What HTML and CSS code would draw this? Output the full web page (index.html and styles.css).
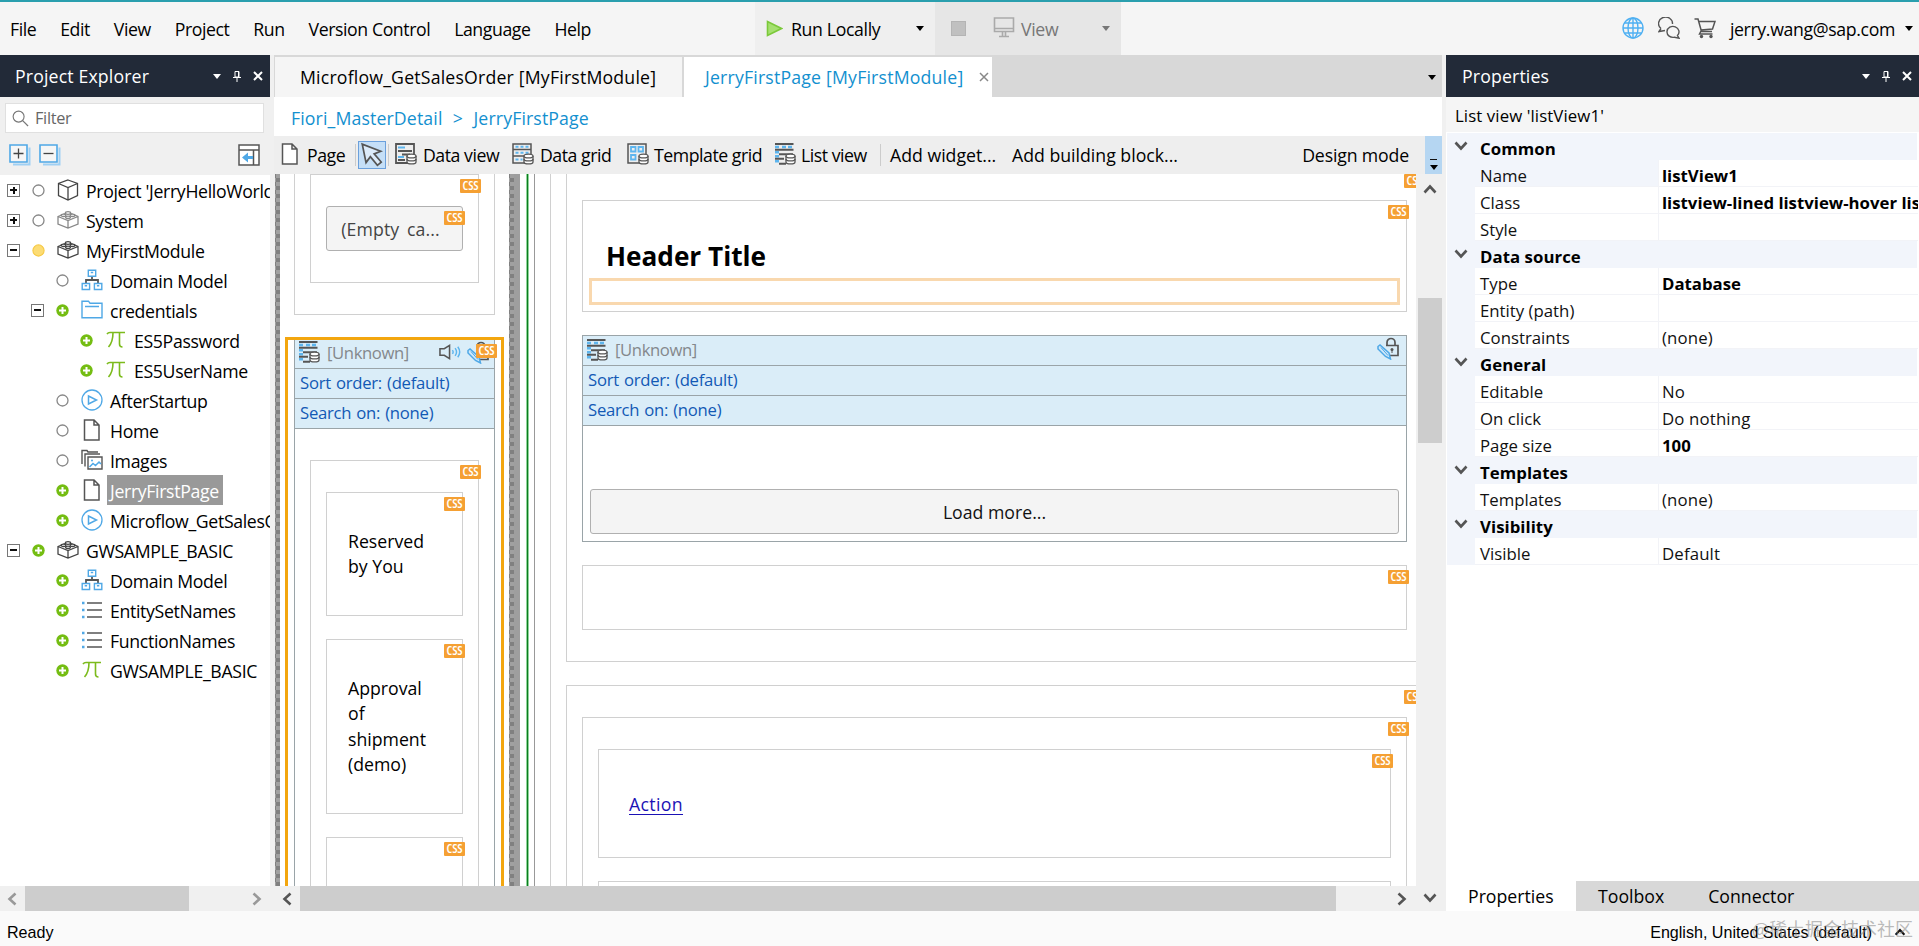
FILE: index.html
```html
<!DOCTYPE html>
<html lang="en">
<head>
    <meta charset="UTF-8">
    <title>JerryFirstPage [MyFirstModule]</title>
    <link rel="stylesheet" href="styles.css">
</head>
<body>
    <!-- Icon set -->
    <svg class="icon-defs" xmlns="http://www.w3.org/2000/svg">
        <symbol id="i-page" viewBox="0 0 22 22"><path d="M3.5 1h9.5l5 5v15H3.500zM13 1v5h5" fill="#fff" stroke="#555" stroke-width="1.5"/></symbol>
        <symbol id="i-cube" viewBox="0 0 22 22"><path d="M11 1l9.500 3.500v12L11 21l-9.500-4.500v-12zM1.500 4.500L11 8.500l9.500-4M11 8.500V21" fill="none" stroke="#444" stroke-width="1.300"/></symbol>
        <symbol id="i-brick" viewBox="0 0 22 22"><g fill="none" stroke="currentColor" stroke-width="1.300"><path d="M1 7.500L11 3.500l10 4v7.500L11 19 1 15zM1 7.500L11 11.500l10-4M11 11.500v7.500"/><g fill="#fff"><ellipse cx="11" cy="4" rx="2.600" ry="1.300"/><ellipse cx="6.500" cy="6.300" rx="2.400" ry="1.200"/><ellipse cx="15.500" cy="6.300" rx="2.400" ry="1.200"/><ellipse cx="11" cy="8.300" rx="2.400" ry="1.200"/></g></g></symbol>
        <symbol id="i-domain" viewBox="0 0 22 22"><path d="M11 8v3M5 14v-3h12v3" fill="none" stroke="#555" stroke-width="1.800"/><g fill="#fff" stroke="#4fa8e6" stroke-width="1.400"><path d="M7.300 1.200h7.400v6H7.300zM1.200 14.500h7.400v6H1.200zM13.400 14.500h7.400v6h-7.400z"/><path d="M9.800 3.500h2.400M3.700 16.800h2.400M15.900 16.800h2.400"/></g></symbol>
        <symbol id="i-folder" viewBox="0 0 22 22"><path d="M1 18.800V2.200h6.500l1.500 2h12v14.600zM4 7.500h14" fill="none" stroke="#4fa8e6" stroke-width="1.400"/></symbol>
        <symbol id="i-pi" viewBox="0 0 22 22"><path d="M2 5.200Q3 3.500 5 3.500h15M8 3.500Q8 13 3.500 18M14.500 3.500V15q0 3 3 3" fill="none" stroke="#7cbb1c" stroke-width="1.600"/></symbol>
        <symbol id="i-flow" viewBox="0 0 22 22"><circle cx="11" cy="11" r="10" fill="none" stroke="#4fa8e6" stroke-width="1.300"/><path d="M7.500 7v8l8-4z" fill="none" stroke="#4fa8e6" stroke-width="1.500"/></symbol>
        <symbol id="i-images" viewBox="0 0 22 22"><path d="M1 15V1.500h5l1 1.500h10M4 17.500V5h15" fill="none" stroke="#555" stroke-width="1.400"/><path d="M7 8h14v12H7z" fill="#fff" stroke="#555" stroke-width="1.400"/><path d="M8.500 18l3.500-3.500 2.500 2L18 13l2 2" fill="none" stroke="#4fa8e6" stroke-width="1.500"/><circle cx="11" cy="11.500" r="1" fill="#4fa8e6"/></symbol>
        <symbol id="i-list" viewBox="0 0 22 22"><path d="M6 4h15M6 11h15M6 18h15" stroke="#555" stroke-width="1.700"/><path d="M1 4h2.500M1 11h2.500M1 18h2.500" stroke="#4fa8e6" stroke-width="2.500"/></symbol>
        <symbol id="i-plus" viewBox="0 0 13 13"><circle cx="6.500" cy="6.500" r="6.200" fill="#74bd12"/><path d="M6.500 3v7M3 6.500h7" stroke="#fff" stroke-width="2"/></symbol>
        <symbol id="i-none" viewBox="0 0 13 13"><circle cx="6.500" cy="6.500" r="5.500" fill="#fff" stroke="#888" stroke-width="1.300"/></symbol>
        <symbol id="i-changed" viewBox="0 0 13 13"><circle cx="6.500" cy="6.500" r="5.600" fill="#fcdc74" stroke="#f6c944" stroke-width="1.100"/></symbol>
        <symbol id="i-db" viewBox="0 0 22 22"><path d="M12 13v6c0 2.600 9 2.600 9 0v-6" fill="#fff" stroke="#555" stroke-width="1.300"/><path d="M12 16c0 2.600 9 2.600 9 0" fill="none" stroke="#555" stroke-width="1.300"/><ellipse cx="16.500" cy="13" rx="4.500" ry="1.900" fill="#fff" stroke="#555" stroke-width="1.300"/></symbol>
        <symbol id="i-dataview" viewBox="0 0 22 22"><path d="M1 1h18v19H1z" fill="none" stroke="#555" stroke-width="1.800"/><path d="M3 4.500h7M3 14h6" stroke="#5db5ee" stroke-width="2.200"/><path d="M3 8h14M7 11.500h8M3 17h7" stroke="#555" stroke-width="2"/><use href="#i-db"/></symbol>
        <symbol id="i-datagrid" viewBox="0 0 22 22"><path d="M1 1h18v19H1zM1 6.500h18M1 13h18" fill="none" stroke="#555" stroke-width="1.500"/><path d="M3.500 3.800h13M3.500 9.800h13M3.500 16.500h7" stroke="#5db5ee" stroke-width="2" stroke-dasharray="3 2"/><use href="#i-db"/></symbol>
        <symbol id="i-template" viewBox="0 0 22 22"><path d="M1 1h18v19H1z" fill="none" stroke="#555" stroke-width="1.500"/><path d="M4 4h4.500v4.500H4zM11.500 4H16v4.500h-4.500zM4 12h4.500v4.500H4z" fill="none" stroke="#5db5ee" stroke-width="1.800"/><use href="#i-db"/></symbol>
        <symbol id="i-listview" viewBox="0 0 22 22"><path d="M1 4h4M8 4h4M14 4h4M1 9.300h4M1 13.300h4M1 18.300h4" stroke="#5db5ee" stroke-width="2.600"/><path d="M1 1h18.500M1 6.800h18.500M5 11.200h14M1 15.700h9M5 20.700h7" stroke="#555" stroke-width="1.900"/><use href="#i-db"/></symbol>
        <symbol id="i-pencil" viewBox="0 0 24 24"><path d="M10 10V6.500a4 4 0 0 1 8 0V10M9 9.500h12v10H9.500" fill="none" stroke="#555" stroke-width="1.700"/><circle cx="15" cy="13.500" r="1.500" fill="#555"/><path d="M15 14v3" stroke="#555"/><path d="M1 10.500L3 9l9 8 1.500 6-5-2.500L1 13z" fill="#cfe8fa" stroke="#4fa8e6" stroke-width="1.500"/><path d="M4 11.500l7 8" stroke="#4fa8e6"/></symbol>
        <symbol id="i-sound" viewBox="0 0 24 18"><path d="M1 5.500h4.500L11 2v14l-5.500-3.500H1z" fill="none" stroke="#555" stroke-width="1.600"/><path d="M14 7q1.500 2 0 4M16.800 5q3 4 0 8M19.600 3.500q4 5.500 0 11" fill="none" stroke="#5db5ee" stroke-width="1.500"/></symbol>
        <symbol id="i-pin" viewBox="0 0 8 11"><path d="M2 .500h4v5.500H2zM0 6.500h8M4 6.500V11M5.500.500V6" fill="none" stroke="#fff"/></symbol>
        <symbol id="i-close" viewBox="0 0 10 10"><path d="M1 1l8 8M9 1L1 9" fill="none" stroke="currentColor"/></symbol>
        <symbol id="i-chev" viewBox="0 0 14 10"><path d="M1.500 1.500L7 7.500l5.500-6" fill="none" stroke="currentColor" stroke-width="2.600"/></symbol>
    </svg>

    <div class="app">
        <!-- Menu bar -->
        <div class="menubar">
            <div class="menu">
                <span>File</span><span>Edit</span><span>View</span><span>Project</span><span>Run</span><span>Version Control</span><span>Language</span><span>Help</span>
            </div>
            <div class="run-box">
                <svg class="play" viewBox="0 0 17 17"><path d="M1.500 1.500v14l14-7z" fill="#a5e070" stroke="#7bc93a" stroke-width="1.600"/></svg>
                <span>Run Locally</span>
                <i class="caret"></i>
            </div>
            <div class="view-box">
                <div class="stop"></div>
                <svg class="monitor" viewBox="0 0 22 21"><path d="M1.500 1h19v13.500h-19zM1.500 11.500h19M9.500 14.500V19M12.500 14.500V19M6 19.500h10" fill="none" stroke="#aaa" stroke-width="1.600"/></svg>
                <span>View</span>
                <i class="caret"></i>
            </div>
            <div class="account">
                <svg viewBox="0 0 22 22"><g fill="none" stroke="#4fb0f2" stroke-width="1.400"><circle cx="11" cy="11" r="10"/><ellipse cx="11" cy="11" rx="5" ry="10"/><path d="M11 1v20M1 11h20M2.500 6h17M2.500 16h17"/></g></svg>
                <svg viewBox="0 0 22 22"><g fill="none" stroke="#555" stroke-width="1.400"><path d="M3 11.500A7 6.500 0 1 1 14.500 7M3 11.500L1 14.500l6-1"/><path d="M19.500 18.500a6 5.500 0 1 0-3 1.700l4.500 1z"/></g></svg>
                <svg viewBox="0 0 22 22"><path d="M.500 2h3.500l3.500 12.500h10.500M4.800 4.500H21l-2.500 7.500-11.500 1M7 14l-1.500 3h13" fill="none" stroke="#555" stroke-width="1.500"/><circle cx="7.500" cy="19.500" r="1.700" fill="#555"/><circle cx="17" cy="19.500" r="1.700" fill="#555"/></svg>
                <span>jerry.wang@sap.com</span>
                <i class="caret"></i>
            </div>
        </div>

        <div class="workspace">
            <!-- Project Explorer -->
            <div class="explorer">
                <div class="panel-head">
                    <span>Project Explorer</span>
                    <i class="caret"></i><svg class="pin"><use href="#i-pin"/></svg><svg class="close"><use href="#i-close"/></svg>
                </div>
                <div class="filter">
                    <svg viewBox="0 0 18 18"><circle cx="7" cy="7" r="5.800" fill="none" stroke="#777" stroke-width="1.200"/><path d="M11.300 11.300L17 17" stroke="#777" stroke-width="1.300"/></svg>
                    <span>Filter</span>
                </div>
                <div class="tree-tools">
                    <svg viewBox="0 0 22 22"><path d="M4 20.500h16.500V3.500" fill="none" stroke="#9fd0f3" stroke-width="2"/><path d="M1 1h17v17H1z" fill="#f6f6f6" stroke="#4fa8e6" stroke-width="1.600"/><path d="M9.500 4.500v10M4.500 9.500h10" stroke="#444" stroke-width="1.300"/></svg>
                    <svg viewBox="0 0 22 22"><path d="M4 20.500h16.500V3.500" fill="none" stroke="#9fd0f3" stroke-width="2"/><path d="M1 1h17v17H1z" fill="#f6f6f6" stroke="#4fa8e6" stroke-width="1.600"/><path d="M4.500 9.500h10" stroke="#444" stroke-width="1.300"/></svg>
                    <svg class="dock" viewBox="0 0 22 22"><path d="M1 1h20v20H1zM1 6h20M15.500 6v15" fill="#fff" stroke="#555" stroke-width="1.500"/><path d="M4 13.500l6-5v3.500h5v3h-5v3.500z" fill="#4fa8e6"/></svg>
                </div>
                <div class="tree">
                    <div class="row"><b class="exp plus"></b><svg class="st"><use href="#i-none"/></svg><svg class="ic"><use href="#i-cube"/></svg><span>Project 'JerryHelloWorld'</span></div>
                    <div class="row"><b class="exp plus"></b><svg class="st"><use href="#i-none"/></svg><svg class="ic light"><use href="#i-brick"/></svg><span>System</span></div>
                    <div class="row"><b class="exp"></b><svg class="st"><use href="#i-changed"/></svg><svg class="ic"><use href="#i-brick"/></svg><span>MyFirstModule</span></div>
                    <div class="row l1"><svg class="st"><use href="#i-none"/></svg><svg class="ic"><use href="#i-domain"/></svg><span>Domain Model</span></div>
                    <div class="row l1 open"><b class="exp"></b><svg class="st"><use href="#i-plus"/></svg><svg class="ic"><use href="#i-folder"/></svg><span>credentials</span></div>
                    <div class="row l2"><svg class="st"><use href="#i-plus"/></svg><svg class="ic"><use href="#i-pi"/></svg><span>ES5Password</span></div>
                    <div class="row l2"><svg class="st"><use href="#i-plus"/></svg><svg class="ic"><use href="#i-pi"/></svg><span>ES5UserName</span></div>
                    <div class="row l1"><svg class="st"><use href="#i-none"/></svg><svg class="ic"><use href="#i-flow"/></svg><span>AfterStartup</span></div>
                    <div class="row l1"><svg class="st"><use href="#i-none"/></svg><svg class="ic"><use href="#i-page"/></svg><span>Home</span></div>
                    <div class="row l1"><svg class="st"><use href="#i-none"/></svg><svg class="ic"><use href="#i-images"/></svg><span>Images</span></div>
                    <div class="row l1 selected"><svg class="st"><use href="#i-plus"/></svg><svg class="ic"><use href="#i-page"/></svg><span>JerryFirstPage</span></div>
                    <div class="row l1"><svg class="st"><use href="#i-plus"/></svg><svg class="ic"><use href="#i-flow"/></svg><span>Microflow_GetSalesOrder</span></div>
                    <div class="row"><b class="exp"></b><svg class="st"><use href="#i-plus"/></svg><svg class="ic"><use href="#i-brick"/></svg><span>GWSAMPLE_BASIC</span></div>
                    <div class="row l1"><svg class="st"><use href="#i-plus"/></svg><svg class="ic"><use href="#i-domain"/></svg><span>Domain Model</span></div>
                    <div class="row l1"><svg class="st"><use href="#i-plus"/></svg><svg class="ic"><use href="#i-list"/></svg><span>EntitySetNames</span></div>
                    <div class="row l1"><svg class="st"><use href="#i-plus"/></svg><svg class="ic"><use href="#i-list"/></svg><span>FunctionNames</span></div>
                    <div class="row l1"><svg class="st"><use href="#i-plus"/></svg><svg class="ic"><use href="#i-pi"/></svg><span>GWSAMPLE_BASIC</span></div>
                </div>
                <div class="hscroll tree-scroll">
                    <svg class="chev left"><use href="#i-chev"/></svg><div class="thumb"></div><svg class="chev right"><use href="#i-chev"/></svg>
                </div>
            </div>

            <!-- Page editor -->
            <div class="editor">
                <div class="tabs">
                    <div class="tab">Microflow_GetSalesOrder [MyFirstModule]</div>
                    <div class="tab active">JerryFirstPage [MyFirstModule]<svg class="close"><use href="#i-close"/></svg></div>
                    <i class="caret"></i>
                </div>
                <div class="breadcrumb"><span>Fiori_MasterDetail</span><span class="sep">&gt;</span><span>JerryFirstPage</span></div>
                <div class="toolbar">
                    <div class="tool t-page"><svg><use href="#i-page"/></svg><span>Page</span></div>
                    <div class="pointer"><svg viewBox="0 0 24 24"><path d="M3 2l3.500 17 4-5.500 6.500 8 3.500-3-6.500-7.500 6-2.500z" fill="#dcebfa" stroke="#555" stroke-width="1.600"/></svg></div>
                    <div class="tool t-dv"><svg><use href="#i-dataview"/></svg><span>Data view</span></div>
                    <div class="tool t-dg"><svg><use href="#i-datagrid"/></svg><span>Data grid</span></div>
                    <div class="tool t-tg"><svg><use href="#i-template"/></svg><span>Template grid</span></div>
                    <div class="tool t-lv"><svg><use href="#i-listview"/></svg><span>List view</span></div>
                    <div class="add-widget">Add widget...</div>
                    <div class="add-block">Add building block...</div>
                    <div class="mode">Design mode</div>
                    <div class="overflow"><i class="dash"></i><i class="caret"></i></div>
                </div>
                <div class="canvas-wrap">
                    <div class="canvas">
                        <div class="hatch"></div>
                        <div class="master">
                            <div class="box search-box">
                                <div class="box inner">
                                    <i class="css">CSS</i>
                                    <div class="btn">(Empty ca...<i class="css">CSS</i></div>
                                </div>
                            </div>
                            <div class="selection">
                                <div class="listview">
                                    <div class="lv-head"><svg><use href="#i-listview"/></svg><span>[Unknown]</span><svg class="sound"><use href="#i-sound"/></svg><svg class="pencil"><use href="#i-pencil"/></svg><i class="css">CSS</i></div>
                                    <div class="lv-row">Sort order: (default)</div>
                                    <div class="lv-row">Search on: (none)</div>
                                    <div class="box items">
                                        <i class="css">CSS</i>
                                        <div class="box item short">Reserved<br>by You<i class="css">CSS</i></div>
                                        <div class="box item">Approval<br>of<br>shipment<br>(demo)<i class="css">CSS</i></div>
                                        <div class="box item"><i class="css">CSS</i></div>
                                    </div>
                                </div>
                            </div>
                        </div>
                        <div class="splitter"></div>
                        <div class="green"></div>
                        <div class="detail">
                            <div class="detail-body">
                                <div class="box section first">
                                    <i class="css">CSS</i>
                                    <div class="box header-box">
                                        <i class="css">CSS</i>
                                        <h1>Header Title</h1>
                                        <div class="dropzone"></div>
                                    </div>
                                    <div class="listview main">
                                        <div class="lv-head"><svg><use href="#i-listview"/></svg><span>[Unknown]</span><svg class="pencil"><use href="#i-pencil"/></svg></div>
                                        <div class="lv-row">Sort order: (default)</div>
                                        <div class="lv-row">Search on: (none)</div>
                                        <div class="btn load">Load more...</div>
                                    </div>
                                    <div class="box empty"><i class="css">CSS</i></div>
                                </div>
                                <div class="box section">
                                    <i class="css">CSS</i>
                                    <div class="box actions">
                                        <i class="css">CSS</i>
                                        <div class="box action"><i class="css">CSS</i><span class="link">Action</span></div>
                                        <div class="box action"></div>
                                    </div>
                                </div>
                            </div>
                        </div>
                    </div>
                    <div class="vscroll">
                        <svg class="chev up"><use href="#i-chev"/></svg><div class="thumb"></div><svg class="chev"><use href="#i-chev"/></svg>
                    </div>
                    <div class="hscroll page-scroll">
                        <svg class="chev left"><use href="#i-chev"/></svg><div class="thumb"></div><svg class="chev right"><use href="#i-chev"/></svg>
                    </div>
                </div>
            </div>

            <!-- Properties -->
            <div class="properties">
                <div class="panel-head">
                    <span>Properties</span>
                    <i class="caret"></i><svg class="pin"><use href="#i-pin"/></svg><svg class="close"><use href="#i-close"/></svg>
                </div>
                <div class="prop-desc">List view 'listView1'</div>
                <div class="grid">
                    <div class="group"><svg class="chev"><use href="#i-chev"/></svg>Common</div>
                    <div class="prop current"><span>Name</span><span class="set">listView1</span></div>
                    <div class="prop"><span>Class</span><span class="set">listview-lined listview-hover listview-sm</span></div>
                    <div class="prop"><span>Style</span><span></span></div>
                    <div class="group"><svg class="chev"><use href="#i-chev"/></svg>Data source</div>
                    <div class="prop"><span>Type</span><span class="set">Database</span></div>
                    <div class="prop"><span>Entity (path)</span><span></span></div>
                    <div class="prop"><span>Constraints</span><span>(none)</span></div>
                    <div class="group"><svg class="chev"><use href="#i-chev"/></svg>General</div>
                    <div class="prop"><span>Editable</span><span>No</span></div>
                    <div class="prop"><span>On click</span><span>Do nothing</span></div>
                    <div class="prop"><span>Page size</span><span class="set">100</span></div>
                    <div class="group"><svg class="chev"><use href="#i-chev"/></svg>Templates</div>
                    <div class="prop"><span>Templates</span><span>(none)</span></div>
                    <div class="group"><svg class="chev"><use href="#i-chev"/></svg>Visibility</div>
                    <div class="prop"><span>Visible</span><span>Default</span></div>
                </div>
                <div class="bottom-tabs"><span class="active">Properties</span><span>Toolbox</span><span>Connector</span></div>
            </div>
        </div>

        <!-- Status bar -->
        <div class="statusbar">
            <span>Ready</span>
            <span class="lang">English, United States (default)</span>
            <svg class="chev up"><use href="#i-chev"/></svg>
            <span class="watermark">@稀土掘金技术社区</span>
        </div>
    </div>
</body>
</html>
```
FILE: styles.css
```css
* { box-sizing: border-box; }
body {
    margin: 0;
    font-family: "Open Sans", "Noto Sans", sans-serif;
    font-size: 17.7px;
    color: #000;
    background: #f0f0f0;
    overflow: hidden;
    white-space: nowrap;
}
.icon-defs { position: absolute; width: 0; height: 0; }
svg { display: block; flex: none; }
.app { display: flex; flex-direction: column; height: 946px; }
.caret {
    flex: none;
    border: 4px solid transparent;
    border-top: 5px solid currentColor;
    border-bottom: 0;
}
.chev { width: 14px; height: 10px; color: #555; }
.chev.left { transform: rotate(90deg); }
.chev.right { transform: rotate(-90deg); }
.chev.up { transform: rotate(180deg); }
.close { width: 10px; height: 10px; stroke-width: 2; }

/* Menu bar */
.menubar {
    display: flex;
    align-items: center;
    height: 55px;
    flex: none;
    border-top: 2px solid #2a9fae;
    background: #f5f5f5;
    letter-spacing: -.35px;
}
.menu { display: flex; gap: 23.9px; width: 755px; padding-left: 10px; letter-spacing: -.42px; }
.run-box, .view-box { display: flex; align-items: center; height: 100%; }
.run-box { width: 180px; background: #efefef; padding: 0 11px; }
.play { width: 17px; height: 17px; margin-right: 8px; }
.run-box .caret, .view-box .caret { margin-left: auto; }
.view-box { width: 186px; background: #e6e6e6; color: #777; padding: 0 11px 0 16px; }
.stop { width: 15px; height: 15px; background: #c0c0c0; border: 1px solid #b4b4b4; margin-right: 27px; }
.monitor { width: 22px; height: 21px; margin-right: 6px; margin-top: -2px; }
.account { display: flex; align-items: center; margin-left: auto; padding-right: 6px; }
.account svg { width: 22px; height: 22px; margin: -2px 14px 0 0; }
.account .caret { margin-left: 10px; }

.workspace { display: flex; height: 856px; }
.panel-head {
    display: flex;
    align-items: center;
    height: 42px;
    flex: none;
    padding: 0 7px 0 15px;
    background: #222a38;
    color: #fff;
    letter-spacing: .15px;
}
.panel-head span { flex: 1; }
.panel-head .pin { width: 8px; height: 11px; margin: 0 12px 0 12px; }

/* Project Explorer */
.explorer { width: 270px; margin-right: 4px; display: flex; flex-direction: column; }
.filter {
    display: flex;
    align-items: center;
    width: 259px;
    height: 30px;
    margin: 6px 0 0 5px;
    padding-left: 6px;
    border: 1px solid #e0e0e0;
    background: #fff;
    color: #666;
    font-size: 16.3px;
    letter-spacing: -.3px;
}
.filter svg { width: 17px; height: 17px; margin-right: 6px; }
.tree-tools { display: flex; gap: 8px; padding: 11px 10px 0 9px; height: 42px; }
.tree-tools svg { width: 22px; height: 22px; }
.tree-tools .dock { margin-left: auto; }
.tree { flex: 1; background: #fff; overflow: hidden; letter-spacing: -.34px; }
.row { display: flex; align-items: center; height: 30px; padding-left: 32px; position: relative; }
.row.l1 { padding-left: 56px; }
.row.l2 { padding-left: 80px; }
.row span { padding: 2px 4px 0 7px; line-height: 28px; }
.row.selected span { margin-left: 4px; padding-left: 3px; background: #999; color: #fff; }
.st { width: 13px; height: 13px; margin-right: 12px; }
.ic { width: 22px; height: 22px; color: #444; }
.row span { margin-left: 0; }
.ic.light { color: #888; }
.exp {
    position: absolute;
    left: 7px;
    width: 13px;
    height: 13px;
    border: 1px solid #777;
    background: linear-gradient(#111, #111) center / 7px 2px no-repeat #fff;
}
.exp.plus { background: linear-gradient(#111, #111) center / 7px 2px no-repeat, linear-gradient(#111, #111) center / 2px 7px no-repeat #fff; }
.open .exp { left: 31px; }
.hscroll { display: flex; align-items: center; height: 25px; background: #f0f0f0; }
.hscroll .thumb { height: 100%; background: #cdcdcd; }
.tree-scroll { padding-left: 5px; }
.tree-scroll .chev { color: #999; }
.tree-scroll .thumb { width: 164px; margin-left: 6px; }
.hscroll .right { margin-left: auto; margin-right: 6px; }

/* Editor */
.editor { width: 1168px; margin-right: 4px; display: flex; flex-direction: column; }
.tabs { display: flex; align-items: center; height: 42px; padding-top: 2px; background: #d8d8d8; letter-spacing: .19px; }
.tab { height: 40px; line-height: 41px; width: 407px; margin-left: 1px; padding-left: 25px; background: #f5f5f5; }
.tab.active { display: flex; align-items: center; width: 308px; margin-left: 2px; padding-left: 21px; background: #fff; color: #1390cf; }
.tab .close { margin-left: auto; margin-right: 3px; color: #888; stroke-width: 1.5; }
.tabs > .caret { margin-left: auto; margin-right: 6px; }
.breadcrumb { display: flex; align-items: center; height: 39px; padding: 2px 0 0 17px; background: #fff; color: #1390cf; letter-spacing: .13px; }
.breadcrumb .sep { width: 31px; text-align: center; }
.toolbar { display: flex; align-items: center; height: 38px; background: #eee; }
.tool { display: flex; align-items: center; letter-spacing: -.46px; }
.tool svg { width: 22px; height: 22px; margin-right: 7px; margin-top: -3px; }
.t-page { width: 82px; height: 22px; padding-left: 5px; border-right: 1px solid #ccc; }
.t-page svg { margin-right: 6px; }
.pointer { width: 28px; height: 28px; margin: 0 2px; border: 1px solid #6ba0dc; background: #c5dff7; }
.pointer svg { width: 26px; height: 26px; }
.t-dv { width: 124px; height: 22px; padding-left: 6px; border-left: 1px solid #ccc; }
.t-dg { width: 115px; }
.t-dv svg, .t-dg svg { margin-right: 6px; }
.t-tg { width: 147px; }
.t-lv { width: 107px; height: 22px; border-right: 1px solid #ccc; }
.t-lv svg, .t-tg svg { margin-right: 5px; }
.add-widget { width: 122px; margin-left: 9px; }
.mode { margin-left: auto; margin-right: 16px; letter-spacing: -.15px; }
.overflow { display: flex; flex-direction: column; align-items: center; width: 17px; height: 38px; padding-top: 23px; background: #b5d6f2; }
.dash { width: 7px; height: 1px; margin-bottom: 5px; background: #111; }

.canvas-wrap { display: grid; grid-template-columns: 1143px 25px; grid-template-rows: 712px 25px; }
.canvas { display: flex; overflow: hidden; background: #fff; border-right: 1px solid #f0f0f0; }
.hatch { width: 6px; flex: none; background: repeating-conic-gradient(#808080 0 25%, #a0a0a0 0 50%) 1px 0 / 8px 8px; border-left: 1px solid #f0f0f0; }
.master { width: 229px; flex: none; }
.box { position: relative; border: 1px solid #d0d0d0; }
.css {
    position: absolute;
    top: 4px;
    right: -3px;
    width: 21px;
    height: 14px;
    border-radius: 1px;
    background: #f5a033;
    color: #fff;
    font: 600 12.5px/14px "Open Sans", sans-serif;
    font-stretch: 75%;
    letter-spacing: -.2px;
    text-align: center;
}
.btn {
    position: relative;
    height: 45px;
    line-height: 45px;
    border: 1px solid #b0b0b0;
    border-radius: 3px;
    background: #f4f4f4;
    color: #333;
    text-align: center;
}
.search-box { width: 201px; height: 141px; margin-left: 14px; padding: 0 15px; border-top: 0; }
.search-box .inner { height: 109px; padding: 31px 15px; }
.search-box .btn { color: #444; padding-right: 8px; letter-spacing: .1px; word-spacing: 3px; }
.selection { width: 219px; height: 600px; margin: 22px 0 0 5px; padding: 0 6px; border: 3px solid #f3a60f; }
.listview { border: 1px solid #9aa4a8; }
.selection .listview { width: 201px; height: 600px; border-top: 0; }
.lv-head, .lv-row {
    position: relative;
    display: flex;
    align-items: center;
    height: 30px;
    border-bottom: 1px solid #9aa4a8;
    background: #daedf8;
    color: #1259b5;
    font-size: 16.7px;
    letter-spacing: -.27px;
    word-spacing: 1px;
}
.selection .lv-head { height: 29px; padding-bottom: 4px; }
.lv-head { padding-left: 3px; padding-bottom: 2px; color: #84888c; }
.lv-head span { letter-spacing: -.4px; }
.lv-head svg { width: 22px; height: 22px; margin-right: 7px; }
.lv-head .sound { width: 23px; height: 18px; margin: 0 5px 0 auto; }
.lv-head .pencil { width: 24px; height: 24px; margin: -3px 5px 0 auto; }
.lv-head .sound + .pencil { margin: 0 3px 0 0; }
.lv-row { padding-left: 5px; padding-bottom: 2px; }
.items { height: 500px; margin: 31px 15px 0; padding: 31px 15px 0; }
.item { height: 175px; margin-bottom: 23px; padding: 36px 0 0 21px; line-height: 25.3px; }
.item.short { height: 124px; }
.splitter { width: 11px; flex: none; background: repeating-conic-gradient(#808080 0 25%, #a0a0a0 0 50%) 1px 0 / 8px 8px; border-right: 6px solid #9e9e9e; }
.green { width: 3px; flex: none; margin: 0 5px 0 6px; background: linear-gradient(90deg, #8fd39a 1px, #0a7d1e 1px 2px, #8fd39a 2px); }
.detail { flex: none; padding-left: 15px; border-left: 1px solid #999; }
.detail-body { padding-left: 15px; border-left: 1px solid #d0d0d0; }
.section { width: 857px; height: 500px; padding: 31px 15px; }
.section.first { height: 488px; margin-bottom: 23px; padding-top: 26px; border-top: 0; }
.section.first > .css { top: 0; }
.header-box { height: 112px; padding: 37px 6px 0; }
h1 { margin: 0 0 3px; padding-left: 17px; font-size: 26.2px; line-height: 37px; color: #000; }
.dropzone { height: 27px; border: 3px solid #f9d8ae; }
.main { height: 207px; margin: 23px 0; }
.main .lv-head { height: 30px; }
.load { margin: 63px 7px 0; color: #111; }
.empty { height: 65px; }
.actions { height: 400px; padding: 31px 15px; }
.action { height: 109px; margin-bottom: 23px; padding: 42px 30px; line-height: 25px; }
.link { color: #1b12b5; letter-spacing: .35px; text-decoration: underline; text-decoration-thickness: 1px; text-underline-offset: 3px; }
.vscroll { grid-row: 1 / 3; grid-column: 2; display: flex; flex-direction: column; align-items: center; padding: 10px 0 8px; background: #f0f0f0; }
.vscroll .thumb { width: 24px; height: 145px; margin-top: 104px; background: #cdcdcd; }
.vscroll .chev:last-child { margin-top: auto; }
.page-scroll { padding-left: 6px; }
.page-scroll .thumb { width: 1036px; margin-left: 6px; }
.page-scroll .right { margin-right: 8px; }

/* Properties */
.properties { width: 473px; display: flex; flex-direction: column; background: #fff; }
.properties .panel-head { padding-left: 16px; }
.prop-desc { height: 36px; line-height: 38px; padding-left: 9px; background: #f5f5f5; border-bottom: 1px solid #fff; font-size: 16.8px; letter-spacing: .1px; }
.grid { font-size: 16.8px; padding-left: 1px; overflow: hidden; color: #111; }
.group { display: flex; align-items: center; height: 27px; padding: 3px 0 0 7px; margin-right: 2px; background: #f2f5fb; color: #000; font-weight: bold; letter-spacing: .05px; }
.group .chev { margin: -5px 12px 0 0; }
.prop { display: flex; height: 27px; border-left: 28px solid #f2f5fb; margin-right: 2px; }
.prop span { flex: none; width: 183px; line-height: 28px; padding: 2px 0 0 5px; border-bottom: 1px solid #f2f3f7; }
.prop span + span { width: 260px; padding-left: 3px; border-left: 1px solid #f2f3f7; overflow: hidden; letter-spacing: .15px; }
.prop.current span:first-child { background: #f2f5fb; }
.prop .set { font-weight: bold; color: #000; }
.prop span.set { letter-spacing: 0; }
.bottom-tabs { display: flex; height: 30px; margin-top: auto; line-height: 30px; background: #d8d8d8; }
.bottom-tabs span { padding: 0 22px; }
.bottom-tabs .active { width: 130px; background: #fff; }

/* Status bar */
.statusbar {
    position: relative;
    display: flex;
    align-items: center;
    height: 35px;
    padding: 7px 13px 0 7px;
    background: #fafafa;
    font-family: "Liberation Sans", Arial, sans-serif;
    font-size: 16.1px;
}
.lang { margin-left: auto; margin-right: 22px; }
.statusbar .chev { width: 12px; height: 8px; color: #111; }
.watermark { position: absolute; right: 6px; top: 4px; font: 18px/27px "Noto Sans CJK SC", sans-serif; color: rgba(130, 130, 130, .55); }
```
